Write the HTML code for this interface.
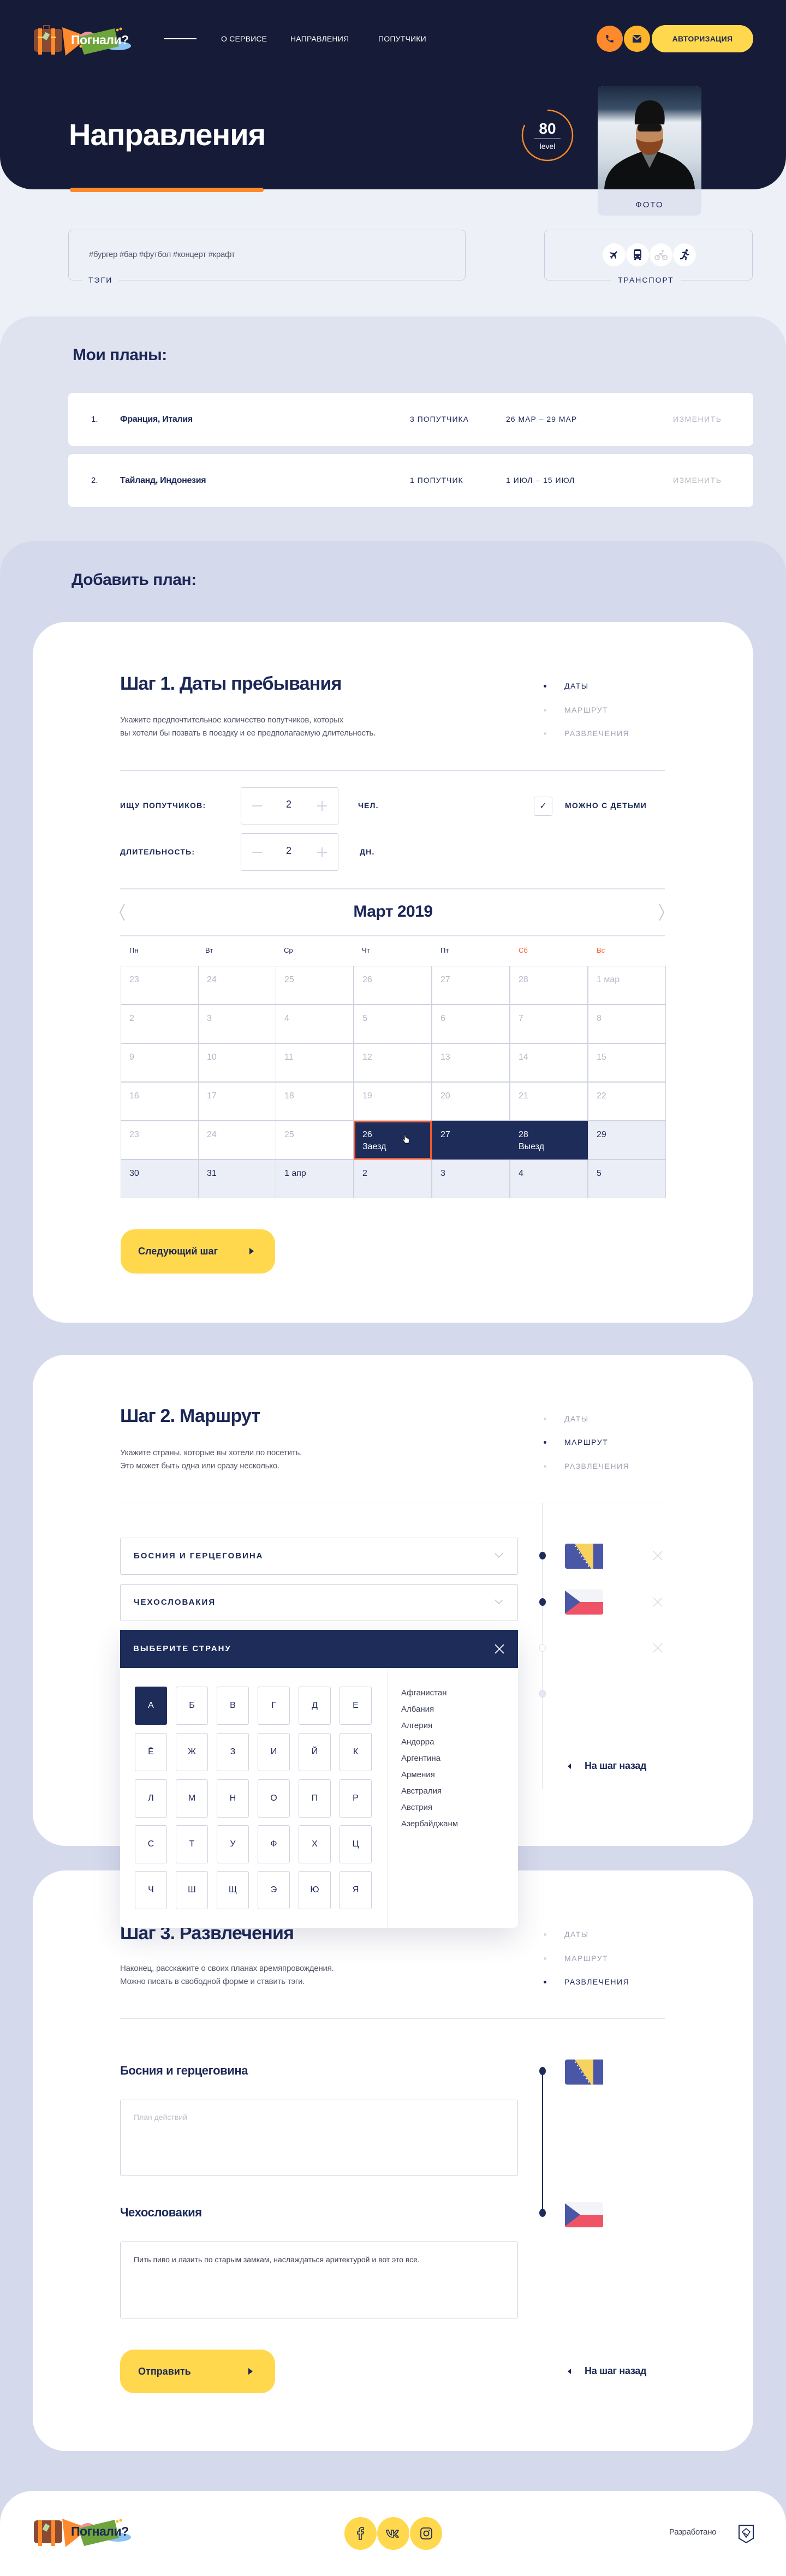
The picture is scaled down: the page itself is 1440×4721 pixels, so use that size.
<!DOCTYPE html>
<html lang="ru"><head><meta charset="utf-8"><style>
*{margin:0;padding:0;box-sizing:border-box}
body{width:1440px;height:4721px;background:#edf0f7;font-family:"Liberation Sans","DejaVu Sans",sans-serif;color:#1b2756;position:relative;overflow:hidden}
.a{position:absolute}
.nav{color:#fff;font-size:14px;top:62px;line-height:18px;letter-spacing:.2px}
.h2{font-size:30px;font-weight:bold;letter-spacing:-.5px;color:#1b2756}
.h3{font-size:34px;font-weight:bold;letter-spacing:-.8px;color:#1b2756}
.desc{font-size:15px;line-height:24px;color:#55586a;letter-spacing:-.2px}
.st{font-size:14px;letter-spacing:1.5px;color:#9ea1b2;line-height:18px}
.st.on{color:#1b2756}
.st:before{content:"";position:absolute;left:-38px;top:7px;width:5px;height:5px;border-radius:50%;background:#d4d7e2}
.st.on:before{background:#1b2756}
.hr{height:2px;background:#dfe2ec}
.lbl{font-size:14px;font-weight:bold;letter-spacing:1.2px;color:#1b2756;line-height:18px}
.card{background:#fff;border-radius:60px}
.cell{position:absolute;width:143px;height:71px;border:1px solid #cfd2e0;font-size:16px;color:#b4b7c6;padding:14px 0 0 15px;line-height:22px}
.lt{background:#ebeef6;color:#1b2756}
.nv{background:#1e2c5a;color:#fff}
.btn{background:#ffd84d;border-radius:26px;font-size:18px;font-weight:bold;color:#1b2756}
.dd{border:1px solid #cfd2e0;border-radius:3px;background:#fff;font-size:15px;letter-spacing:2px;color:#1b2756;font-weight:bold}
.k{position:absolute;width:59px;height:70px;border:1px solid #cfd2e0;border-radius:3px;text-align:center;line-height:68px;font-size:16px;color:#1b2756}
.cl{font-size:15px;color:#3d4156;line-height:30px}
.ta{border:1px solid #cfd2e0;border-radius:3px;background:#fff}
</style></head><body>

<!-- HEADER -->
<div class="a" style="left:0;top:0;width:1440px;height:347px;background:#161b37;border-radius:0 0 60px 60px"></div>
<svg class="a" style="left:58px;top:40px" width="205" height="70" viewBox="0 0 205 70">
 <path d="M56 10 L105 28 L62 62 Z" fill="#ff8a2b"/>
 <ellipse cx="103" cy="32" rx="16" ry="14" fill="#e9959a"/>
 <ellipse cx="158" cy="44" rx="24" ry="8" fill="#8ac4f2"/>
 <path d="M85 28 L152 12 L160 45 L96 60 Z" fill="#6ea43c"/>
 <circle cx="157" cy="15" r="2.5" fill="#ffb52b"/><circle cx="163" cy="13" r="2.5" fill="#ffb52b"/><circle cx="90" cy="45" r="2.5" fill="#ffb52b"/>
 <rect x="4" y="13" width="52" height="42" rx="6" fill="#8a4a32"/>
 <path d="M22 13 V7 H32 V13" stroke="#8a4a32" stroke-width="2" fill="none"/>
 <rect x="12" y="12" width="7" height="48" fill="#ff8a2b"/><rect x="36" y="12" width="7" height="48" fill="#ff8a2b"/>
 <rect x="11" y="27" width="9" height="3" fill="#ffd84d"/><rect x="35" y="27" width="9" height="3" fill="#ffd84d"/>
 <rect x="22" y="20" width="9" height="12" fill="#b9d8a8" transform="rotate(30 26 26)"/>
 <text x="72" y="41" font-family="Liberation Sans" font-weight="bold" font-size="23" fill="#fff" letter-spacing="-0.5">Погнали?</text>
</svg>
<div class="a" style="left:301px;top:70px;width:59px;height:2px;background:#fff"></div>
<div class="a nav" style="left:405px">О СЕРВИСЕ</div>
<div class="a nav" style="left:532px">НАПРАВЛЕНИЯ</div>
<div class="a nav" style="left:693px">ПОПУТЧИКИ</div>
<div class="a" style="left:1093px;top:47px;width:48px;height:48px;border-radius:50%;background:#ff8a2b"></div>
<svg class="a" style="left:1108px;top:62px" width="18" height="18" viewBox="0 0 24 24"><path d="M6.6 10.8c1.4 2.8 3.800 5.1 6.6 6.6l2.2-2.2c.3-.3.7-.4 1-.2 1.1.4 2.3.6 3.6.6.6 0 1 .4 1 1V20c0 .6-.4 1-1 1C10.6 21 3 13.4 3 4c0-.6.4-1 1-1h3.5c.6 0 1 .4 1 1 0 1.3.2 2.5.6 3.6.1.3 0 .7-.2 1L6.6 10.8z" fill="#1b2756"/></svg>
<div class="a" style="left:1143px;top:47px;width:48px;height:48px;border-radius:50%;background:#ffb52b"></div>
<svg class="a" style="left:1158px;top:63px" width="18" height="16" viewBox="0 0 18 16"><rect x="1" y="1" width="16" height="14" fill="#1b2756"/><path d="M1 2 L9 9 L17 2" stroke="#ffb52b" stroke-width="2" fill="none"/></svg>
<div class="a" style="left:1194px;top:46px;width:186px;height:50px;border-radius:25px;background:#ffd84d;color:#1b2756;font-size:14px;font-weight:bold;text-align:center;line-height:50px;letter-spacing:.3px">АВТОРИЗАЦИЯ</div>

<div class="a" style="left:126px;top:215px;font-size:56px;font-weight:bold;color:#fff;letter-spacing:-1px;line-height:64px">Направления</div>
<div class="a" style="left:128px;top:344px;width:355px;height:8px;border-radius:4px;background:#ff8a2b"></div>

<svg class="a" style="left:950px;top:195px" width="106" height="106" viewBox="0 0 106 106">
 <circle cx="53" cy="53" r="46" fill="none" stroke="#ff8a2b" stroke-width="2.5" stroke-dasharray="236 289" transform="rotate(-90 53 53)"/>
 <text x="53" y="50" text-anchor="middle" font-family="Liberation Sans" font-weight="bold" font-size="28" fill="#fff">80</text>
 <rect x="29" y="58" width="48" height="2" fill="#6a6f88"/>
 <text x="53" y="78" text-anchor="middle" font-family="Liberation Sans" font-size="14" fill="#fff">level</text>
</svg>

<div class="a" style="left:1095px;top:158px;width:190px;height:237px;border-radius:10px;background:#dfe2ef;overflow:hidden">
 <svg width="190" height="189" viewBox="0 0 190 189">
  <defs><linearGradient id="bg" x1="0" y1="0" x2="0" y2="1"><stop offset="0" stop-color="#1d2a40"/><stop offset=".22" stop-color="#3a5068"/><stop offset=".35" stop-color="#e8edf2"/><stop offset=".7" stop-color="#d3dce4"/><stop offset="1" stop-color="#a9b8c6"/></linearGradient></defs>
  <rect width="190" height="189" fill="url(#bg)"/>
  <path d="M12 189 C14 150 40 135 80 120 L110 120 C150 132 176 150 178 189 Z" fill="#0d0f10"/>
  <path d="M80 120 L95 150 L110 120 Z" fill="#6f7476"/>
  <ellipse cx="95" cy="88" rx="25" ry="32" fill="#c08a5e"/>
  <path d="M70 95 C72 120 85 126 95 126 C105 126 118 120 120 95 C112 105 78 105 70 95 Z" fill="#8a4620"/>
  <path d="M68 70 C66 34 82 26 96 26 C112 26 126 38 122 70 Z" fill="#111"/>
  <rect x="73" y="70" width="44" height="13" rx="5" fill="#151515"/>
 </svg>
 <div style="text-align:center;font-size:15px;letter-spacing:2px;color:#1b2756;line-height:48px">ФОТО</div>
</div>

<!-- tags / transport -->
<div class="a" style="left:125px;top:421px;width:728px;height:93px;border:1px solid #c9cde0;border-radius:8px"></div>
<div class="a" style="left:163px;top:458px;font-size:15px;color:#55586a;letter-spacing:-.3px">#бургер #бар #футбол #концерт #крафт</div>
<div class="a" style="left:150px;top:505px;padding:0 12px;background:#edf0f7;font-size:14px;letter-spacing:2px;color:#1b2756">ТЭГИ</div>
<div class="a" style="left:997px;top:421px;width:382px;height:93px;border:1px solid #c9cde0;border-radius:8px"></div>
<div class="a" style="left:1104px;top:446px;width:42px;height:42px;border-radius:50%;background:#fff"></div>
<div class="a" style="left:1147px;top:446px;width:42px;height:42px;border-radius:50%;background:#fff"></div>
<div class="a" style="left:1190px;top:446px;width:42px;height:42px;border-radius:50%;background:#fff"></div>
<div class="a" style="left:1233px;top:446px;width:42px;height:42px;border-radius:50%;background:#fff"></div>
<svg class="a" style="left:1115px;top:457px" width="20" height="20" viewBox="0 0 24 24"><path d="M21 16v-2l-8-5V3.5C13 2.7 12.3 2 11.5 2S10 2.700 10 3.5V9l-8 5v2l8-2.5V19l-2 1.5V22l3.5-1 3.5 1v-1.5L13 19v-5.5l8 2.5z" fill="#1b2756" transform="rotate(45 12 12)"/></svg>
<svg class="a" style="left:1159px;top:456px" width="18" height="22" viewBox="0 0 18 22"><rect x="2" y="1" width="14" height="17" rx="3" fill="#1b2756"/><rect x="4" y="4" width="10" height="6" fill="#fff"/><circle cx="5.5" cy="14" r="1.3" fill="#fff"/><circle cx="12.5" cy="14" r="1.3" fill="#fff"/><rect x="3" y="18" width="3" height="3" fill="#1b2756"/><rect x="12" y="18" width="3" height="3" fill="#1b2756"/></svg>
<svg class="a" style="left:1199px;top:456px" width="24" height="22" viewBox="0 0 24 22"><g stroke="#cfcfd4" stroke-width="1.8" fill="none"><circle cx="5" cy="16" r="4"/><circle cx="19" cy="16" r="4"/><path d="M5 16 L10 9 L14 13 L19 16 M10 9 L15 8"/></g><circle cx="15" cy="4" r="2" fill="#cfcfd4"/></svg>
<svg class="a" style="left:1244px;top:456px" width="20" height="22" viewBox="0 0 20 22"><circle cx="14" cy="3" r="2.2" fill="#1b2756"/><path d="M6 7 L12 6 L15 11 L18 10 M12 6 L9 13 L13 16 L12 21 M9 13 L6 18 L2 18" stroke="#1b2756" stroke-width="2.4" fill="none" stroke-linejoin="round"/></svg>
<div class="a" style="left:1120px;top:505px;padding:0 12px;background:#edf0f7;font-size:14px;letter-spacing:2px;color:#1b2756">ТРАНСПОРТ</div>

<!-- MY PLANS -->
<div class="a" style="left:0;top:580px;width:1440px;height:500px;background:#dfe2ef;border-radius:60px 60px 0 0"></div>
<div class="a h2" style="left:133px;top:634px">Мои планы:</div>
<div class="a" style="left:125px;top:720px;width:1255px;height:97px;background:#fff;border-radius:8px"></div>
<div class="a" style="left:125px;top:832px;width:1255px;height:97px;background:#fff;border-radius:8px"></div>
<div class="a" style="left:167px;top:760px;font-size:15px">1.</div>
<div class="a" style="left:220px;top:760px;font-size:16px;font-weight:bold;letter-spacing:-.3px">Франция, Италия</div>
<div class="a" style="left:751px;top:760px;font-size:14px;letter-spacing:1px">3 ПОПУТЧИКА</div>
<div class="a" style="left:927px;top:760px;font-size:14px;letter-spacing:1px">26 МАР – 29 МАР</div>
<div class="a" style="left:1233px;top:760px;font-size:14px;letter-spacing:1.5px;color:#b5b7c2">ИЗМЕНИТЬ</div>
<div class="a" style="left:167px;top:872px;font-size:15px">2.</div>
<div class="a" style="left:220px;top:872px;font-size:16px;font-weight:bold;letter-spacing:-.3px">Тайланд, Индонезия</div>
<div class="a" style="left:751px;top:872px;font-size:14px;letter-spacing:1px">1 ПОПУТЧИК</div>
<div class="a" style="left:927px;top:872px;font-size:14px;letter-spacing:1px">1 ИЮЛ – 15 ИЮЛ</div>
<div class="a" style="left:1233px;top:872px;font-size:14px;letter-spacing:1.5px;color:#b5b7c2">ИЗМЕНИТЬ</div>

<!-- ADD PLAN -->
<div class="a" style="left:0;top:992px;width:1440px;height:3729px;background:#d5d9ec;border-radius:60px 60px 0 0"></div>
<div class="a h2" style="left:131px;top:1046px">Добавить план:</div>

<!-- CARD 1 -->
<div class="a card" style="left:60px;top:1140px;width:1320px;height:1284px"></div>
<div class="a h3" style="left:220px;top:1234px">Шаг 1. Даты пребывания</div>
<div class="a desc" style="left:220px;top:1308px">Укажите предпочтительное количество попутчиков, которых<br>вы хотели бы позвать в поездку и ее предполагаемую длительность.</div>
<div class="a st on" style="left:1034px;top:1248px">ДАТЫ</div>
<div class="a st" style="left:1034px;top:1292px">МАРШРУТ</div>
<div class="a st" style="left:1034px;top:1335px">РАЗВЛЕЧЕНИЯ</div>
<div class="a hr" style="left:220px;top:1411px;width:998px"></div>
<div class="a lbl" style="left:220px;top:1467px">ИЩУ ПОПУТЧИКОВ:</div>
<div class="a" style="left:441px;top:1443px;width:179px;height:68px;border:1px solid #cfd2e0;border-radius:3px"></div>
<div class="a" style="left:462px;top:1476px;width:18px;height:2px;background:#cfd2e0"></div>
<div class="a" style="left:524px;top:1464px;font-size:18px">2</div>
<div class="a" style="left:581px;top:1476px;width:18px;height:2px;background:#cfd2e0"></div>
<div class="a" style="left:589px;top:1468px;width:2px;height:18px;background:#cfd2e0"></div>
<div class="a lbl" style="left:656px;top:1467px">ЧЕЛ.</div>
<div class="a" style="left:978px;top:1460px;width:34px;height:35px;border:1px solid #cfd2e0;border-radius:3px;text-align:center;line-height:33px;font-size:16px">✓</div>
<div class="a lbl" style="left:1035px;top:1467px">МОЖНО С ДЕТЬМИ</div>
<div class="a lbl" style="left:220px;top:1552px">ДЛИТЕЛЬНОСТЬ:</div>
<div class="a" style="left:441px;top:1527px;width:179px;height:69px;border:1px solid #cfd2e0;border-radius:3px"></div>
<div class="a" style="left:462px;top:1561px;width:18px;height:2px;background:#cfd2e0"></div>
<div class="a" style="left:524px;top:1549px;font-size:18px">2</div>
<div class="a" style="left:581px;top:1561px;width:18px;height:2px;background:#cfd2e0"></div>
<div class="a" style="left:589px;top:1553px;width:2px;height:18px;background:#cfd2e0"></div>
<div class="a lbl" style="left:659px;top:1552px">ДН.</div>
<div class="a hr" style="left:220px;top:1628px;width:998px"></div>
<svg class="a" style="left:218px;top:1656px" width="12" height="32"><path d="M10 1 L2 16 L10 31" stroke="#c6c8d4" stroke-width="2" fill="none"/></svg>
<svg class="a" style="left:1206px;top:1656px" width="12" height="32"><path d="M2 1 L10 16 L2 31" stroke="#c6c8d4" stroke-width="2" fill="none"/></svg>
<div class="a" style="left:620px;top:1654px;width:200px;text-align:center;font-size:30px;font-weight:bold;letter-spacing:-.5px">Март 2019</div>
<div class="a hr" style="left:220px;top:1714px;width:998px"></div>
<div class="a" style="left:237px;top:1734px;font-size:13px">Пн</div>
<div class="a" style="left:376px;top:1734px;font-size:13px">Вт</div>
<div class="a" style="left:520px;top:1734px;font-size:13px">Ср</div>
<div class="a" style="left:663px;top:1734px;font-size:13px">Чт</div>
<div class="a" style="left:807px;top:1734px;font-size:13px">Пт</div>
<div class="a" style="left:950px;top:1734px;font-size:13px;color:#ff5a2b">Сб</div>
<div class="a" style="left:1093px;top:1734px;font-size:13px;color:#ff5a2b">Вс</div>

<div class="cell" style="left:221px;top:1770px">23</div><div class="cell" style="left:363px;top:1770px">24</div><div class="cell" style="left:505px;top:1770px">25</div><div class="cell" style="left:648px;top:1770px">26</div><div class="cell" style="left:791px;top:1770px">27</div><div class="cell" style="left:934px;top:1770px">28</div><div class="cell" style="left:1077px;top:1770px">1 мар</div>
<div class="cell" style="left:221px;top:1841px">2</div><div class="cell" style="left:363px;top:1841px">3</div><div class="cell" style="left:505px;top:1841px">4</div><div class="cell" style="left:648px;top:1841px">5</div><div class="cell" style="left:791px;top:1841px">6</div><div class="cell" style="left:934px;top:1841px">7</div><div class="cell" style="left:1077px;top:1841px">8</div>
<div class="cell" style="left:221px;top:1912px">9</div><div class="cell" style="left:363px;top:1912px">10</div><div class="cell" style="left:505px;top:1912px">11</div><div class="cell" style="left:648px;top:1912px">12</div><div class="cell" style="left:791px;top:1912px">13</div><div class="cell" style="left:934px;top:1912px">14</div><div class="cell" style="left:1077px;top:1912px">15</div>
<div class="cell" style="left:221px;top:1983px">16</div><div class="cell" style="left:363px;top:1983px">17</div><div class="cell" style="left:505px;top:1983px">18</div><div class="cell" style="left:648px;top:1983px">19</div><div class="cell" style="left:791px;top:1983px">20</div><div class="cell" style="left:934px;top:1983px">21</div><div class="cell" style="left:1077px;top:1983px">22</div>
<div class="cell" style="left:221px;top:2054px">23</div><div class="cell" style="left:363px;top:2054px">24</div><div class="cell" style="left:505px;top:2054px">25</div>
<div class="cell nv" style="left:648px;top:2054px;border:3px solid #ff5a2b;padding:12px 0 0 13px">26<br>Заезд</div>
<div class="cell nv" style="left:791px;top:2054px;border-color:#1e2c5a">27</div>
<div class="cell nv" style="left:934px;top:2054px;border-color:#1e2c5a">28<br>Выезд</div>
<div class="cell lt" style="left:1077px;top:2054px">29</div>
<div class="cell lt" style="left:221px;top:2125px">30</div><div class="cell lt" style="left:363px;top:2125px">31</div><div class="cell lt" style="left:505px;top:2125px">1 апр</div><div class="cell lt" style="left:648px;top:2125px">2</div><div class="cell lt" style="left:791px;top:2125px">3</div><div class="cell lt" style="left:934px;top:2125px">4</div><div class="cell lt" style="left:1077px;top:2125px">5</div>
<svg class="a" style="left:737px;top:2079px" width="14" height="18" viewBox="0 0 14 18"><path d="M4 1 V10 L2 8 L1 10 L5 16 H12 L13 9 L10 8 V6 L8 6 V5 L6 5 V1 Z" fill="#fff" stroke="#000" stroke-width="1"/></svg>

<div class="a btn" style="left:221px;top:2253px;width:283px;height:81px;line-height:81px;padding-left:32px">Следующий шаг</div>
<svg class="a" style="left:456px;top:2286px" width="10" height="14"><path d="M1 1 L9 7 L1 13 Z" fill="#1b2756"/></svg>

<!-- CARD 2 -->
<div class="a card" style="left:60px;top:2483px;width:1320px;height:900px"></div>
<div class="a h3" style="left:220px;top:2576px">Шаг 2. Маршрут</div>
<div class="a desc" style="left:220px;top:2651px">Укажите страны, которые вы хотели по посетить.<br>Это может быть одна или сразу несколько.</div>
<div class="a st" style="left:1034px;top:2591px">ДАТЫ</div>
<div class="a st on" style="left:1034px;top:2634px">МАРШРУТ</div>
<div class="a st" style="left:1034px;top:2678px">РАЗВЛЕЧЕНИЯ</div>
<div class="a" style="left:220px;top:2754px;width:998px;height:1px;background:#dfe2ec"></div>
<div class="a" style="left:993px;top:2754px;width:1px;height:525px;background:#dfe2ec"></div>
<div class="a dd" style="left:220px;top:2818px;width:729px;height:68px;line-height:66px;padding-left:24px">БОСНИЯ И ГЕРЦЕГОВИНА</div>
<div class="a dd" style="left:220px;top:2903px;width:729px;height:68px;line-height:66px;padding-left:24px">ЧЕХОСЛОВАКИЯ</div>
<svg class="a" style="left:906px;top:2846px" width="16" height="10"><path d="M1 1 L8 8 L15 1" stroke="#b7bac8" stroke-width="1.3" fill="none"/></svg>
<svg class="a" style="left:906px;top:2931px" width="16" height="10"><path d="M1 1 L8 8 L15 1" stroke="#b7bac8" stroke-width="1.3" fill="none"/></svg>
<div class="a" style="left:988px;top:2844px;width:12px;height:14px;border-radius:50%;background:#1e2c5a"></div>
<div class="a" style="left:988px;top:2929px;width:12px;height:14px;border-radius:50%;background:#1e2c5a"></div>
<div class="a" style="left:988px;top:3013px;width:12px;height:14px;border-radius:50%;background:#fff;border:1px solid #dfe2ec"></div>
<div class="a" style="left:988px;top:3097px;width:12px;height:14px;border-radius:50%;background:#e6e9f2;border:1px solid #d4d8e6"></div>
<svg class="a" style="left:1035px;top:2829px" width="70" height="46" viewBox="0 0 70 46"><rect width="70" height="46" rx="4" fill="#4a56a6"/><path d="M18 0 H52 V46 H48 Z" fill="#f7d35e"/><rect x="52" width="18" height="46" fill="#4a56a6"/><g fill="#fff"><circle cx="19" cy="5" r="1.2"/><circle cx="23" cy="11" r="1.2"/><circle cx="27" cy="17" r="1.2"/><circle cx="31" cy="23" r="1.2"/><circle cx="35" cy="29" r="1.2"/><circle cx="39" cy="35" r="1.2"/><circle cx="43" cy="41" r="1.2"/></g></svg>
<svg class="a" style="left:1035px;top:2913px" width="70" height="46" viewBox="0 0 70 46"><rect width="70" height="46" rx="4" fill="#f3f4f8"/><path d="M0 23 H70 V42 Q70 46 66 46 H4 Q0 46 0 42 Z" fill="#ee5466"/><path d="M0 2 L28 23 L0 44 Z" fill="#4a56a6"/></svg>
<svg class="a" style="left:1196px;top:2842px" width="18" height="18"><path d="M1 1 L17 17 M17 1 L1 17" stroke="#d6d8e2" stroke-width="1.3"/></svg>
<svg class="a" style="left:1196px;top:2927px" width="18" height="18"><path d="M1 1 L17 17 M17 1 L1 17" stroke="#d6d8e2" stroke-width="1.3"/></svg>
<svg class="a" style="left:1196px;top:3011px" width="18" height="18"><path d="M1 1 L17 17 M17 1 L1 17" stroke="#d6d8e2" stroke-width="1.3"/></svg>
<svg class="a" style="left:1039px;top:3231px" width="8" height="12"><path d="M7 1 L1 6 L7 11 Z" fill="#1b2756"/></svg>
<div class="a" style="left:1071px;top:3226px;font-size:18px;font-weight:bold;letter-spacing:-.3px">На шаг назад</div>

<!-- CARD 3 -->
<div class="a card" style="left:60px;top:3428px;width:1320px;height:1064px"></div>
<div class="a h3" style="left:220px;top:3524px">Шаг 3. Развлечения</div>
<div class="a desc" style="left:220px;top:3596px">Наконец, расскажите о своих планах времяпровождения.<br>Можно писать в свободной форме и ставить тэги.</div>
<div class="a st" style="left:1034px;top:3536px">ДАТЫ</div>
<div class="a st" style="left:1034px;top:3580px">МАРШРУТ</div>
<div class="a st on" style="left:1034px;top:3623px">РАЗВЛЕЧЕНИЯ</div>
<div class="a" style="left:220px;top:3699px;width:998px;height:1px;background:#dfe2ec"></div>
<div class="a" style="left:220px;top:3782px;font-size:22px;font-weight:bold;letter-spacing:-.4px">Босния и герцеговина</div>
<div class="a ta" style="left:220px;top:3848px;width:729px;height:140px"></div>
<div class="a" style="left:245px;top:3872px;font-size:14px;color:#bfc1cc">План действий</div>
<div class="a" style="left:220px;top:4042px;font-size:22px;font-weight:bold;letter-spacing:-.4px">Чехословакия</div>
<div class="a ta" style="left:220px;top:4108px;width:729px;height:141px"></div>
<div class="a" style="left:245px;top:4133px;font-size:14px;color:#3d4156">Пить пиво и лазить по старым замкам, наслаждаться аритектурой и вот это все.</div>
<div class="a" style="left:993px;top:3796px;width:2px;height:260px;background:#1e2c5a"></div>
<div class="a" style="left:988px;top:3788px;width:12px;height:15px;border-radius:50%;background:#1e2c5a"></div>
<div class="a" style="left:988px;top:4048px;width:12px;height:15px;border-radius:50%;background:#1e2c5a"></div>
<svg class="a" style="left:1035px;top:3774px" width="70" height="47" viewBox="0 0 70 46"><rect width="70" height="46" rx="4" fill="#4a56a6"/><path d="M18 0 H52 V46 H48 Z" fill="#f7d35e"/><rect x="52" width="18" height="46" fill="#4a56a6"/><g fill="#fff"><circle cx="19" cy="5" r="1.2"/><circle cx="23" cy="11" r="1.2"/><circle cx="27" cy="17" r="1.2"/><circle cx="31" cy="23" r="1.2"/><circle cx="35" cy="29" r="1.2"/><circle cx="39" cy="35" r="1.2"/><circle cx="43" cy="41" r="1.2"/></g></svg>
<svg class="a" style="left:1035px;top:4036px" width="70" height="46" viewBox="0 0 70 46"><rect width="70" height="46" rx="4" fill="#f3f4f8"/><path d="M0 23 H70 V42 Q70 46 66 46 H4 Q0 46 0 42 Z" fill="#ee5466"/><path d="M0 2 L28 23 L0 44 Z" fill="#4a56a6"/></svg>
<div class="a btn" style="left:220px;top:4306px;width:284px;height:80px;line-height:80px;padding-left:33px">Отправить</div>
<svg class="a" style="left:454px;top:4339px" width="10" height="14"><path d="M1 1 L9 7 L1 13 Z" fill="#1b2756"/></svg>
<svg class="a" style="left:1039px;top:4340px" width="8" height="12"><path d="M7 1 L1 6 L7 11 Z" fill="#1b2756"/></svg>
<div class="a" style="left:1071px;top:4335px;font-size:18px;font-weight:bold;letter-spacing:-.3px">На шаг назад</div>

<!-- COUNTRY PICKER -->
<div class="a" style="left:220px;top:2987px;width:729px;height:546px;background:#fff;border-radius:0 0 8px 8px;box-shadow:0 20px 50px rgba(40,50,90,.15)"></div>
<div class="a" style="left:220px;top:2987px;width:729px;height:70px;background:#1e2c5a;color:#fff;font-size:15px;font-weight:bold;letter-spacing:2px;line-height:70px;padding-left:24px">ВЫБЕРИТЕ СТРАНУ</div>
<svg class="a" style="left:906px;top:3013px" width="18" height="18"><path d="M1 1 L17 17 M17 1 L1 17" stroke="#fff" stroke-width="1.6"/></svg>
<div class="a" style="left:709px;top:3057px;width:1px;height:476px;background:#eceef4"></div>
<div class="k" style="left:247px;top:3091px;background:#1e2c5a;color:#fff;border-color:#1e2c5a">А</div><div class="k" style="left:322px;top:3091px">Б</div><div class="k" style="left:397px;top:3091px">В</div><div class="k" style="left:472px;top:3091px">Г</div><div class="k" style="left:547px;top:3091px">Д</div><div class="k" style="left:622px;top:3091px">Е</div>
<div class="k" style="left:247px;top:3176px">Ё</div><div class="k" style="left:322px;top:3176px">Ж</div><div class="k" style="left:397px;top:3176px">З</div><div class="k" style="left:472px;top:3176px">И</div><div class="k" style="left:547px;top:3176px">Й</div><div class="k" style="left:622px;top:3176px">К</div>
<div class="k" style="left:247px;top:3261px">Л</div><div class="k" style="left:322px;top:3261px">М</div><div class="k" style="left:397px;top:3261px">Н</div><div class="k" style="left:472px;top:3261px">О</div><div class="k" style="left:547px;top:3261px">П</div><div class="k" style="left:622px;top:3261px">Р</div>
<div class="k" style="left:247px;top:3345px">С</div><div class="k" style="left:322px;top:3345px">Т</div><div class="k" style="left:397px;top:3345px">У</div><div class="k" style="left:472px;top:3345px">Ф</div><div class="k" style="left:547px;top:3345px">Х</div><div class="k" style="left:622px;top:3345px">Ц</div>
<div class="k" style="left:247px;top:3429px">Ч</div><div class="k" style="left:322px;top:3429px">Ш</div><div class="k" style="left:397px;top:3429px">Щ</div><div class="k" style="left:472px;top:3429px">Э</div><div class="k" style="left:547px;top:3429px">Ю</div><div class="k" style="left:622px;top:3429px">Я</div>
<div class="a cl" style="left:735px;top:3088px">Афганистан<br>Албания<br>Алгерия<br>Андорра<br>Аргентина<br>Армения<br>Австралия<br>Австрия<br>Азербайджанм</div>

<!-- FOOTER -->
<div class="a" style="left:0;top:4565px;width:1440px;height:156px;background:#fff;border-radius:60px 60px 0 0"></div>
<svg class="a" style="left:58px;top:4606px" width="205" height="70" viewBox="0 0 205 70">
 <path d="M56 10 L105 28 L62 62 Z" fill="#ff8a2b"/>
 <ellipse cx="103" cy="32" rx="16" ry="14" fill="#e9959a"/>
 <ellipse cx="158" cy="44" rx="24" ry="8" fill="#8ac4f2"/>
 <path d="M85 28 L152 12 L160 45 L96 60 Z" fill="#6ea43c"/>
 <circle cx="157" cy="15" r="2.5" fill="#ffb52b"/><circle cx="163" cy="13" r="2.5" fill="#ffb52b"/>
 <rect x="4" y="13" width="52" height="42" rx="6" fill="#8a4a32"/>
 <rect x="12" y="12" width="7" height="48" fill="#ff8a2b"/><rect x="36" y="12" width="7" height="48" fill="#ff8a2b"/>
 <rect x="22" y="20" width="9" height="12" fill="#b9d8a8" transform="rotate(30 26 26)"/>
 <text x="72" y="41" font-family="Liberation Sans" font-weight="bold" font-size="23" fill="#1b2756" letter-spacing="-0.5">Погнали?</text>
</svg>
<div class="a" style="left:631px;top:4613px;width:59px;height:60px;border-radius:50%;background:#ffd84d"></div>
<div class="a" style="left:691px;top:4613px;width:59px;height:60px;border-radius:50%;background:#ffd84d"></div>
<div class="a" style="left:751px;top:4613px;width:59px;height:60px;border-radius:50%;background:#ffd84d"></div>
<svg class="a" style="left:652px;top:4631px" width="16" height="24" viewBox="0 0 16 24"><path d="M10 23 V13 H13 L14 9 H10 V6.5 C10 5.5 10.5 5 11.5 5 H14 V1.5 C13 1.3 12 1.2 10.8 1.2 C7.8 1.2 6 3 6 6 V9 H3 V13 H6 V23 Z" fill="none" stroke="#1b2756" stroke-width="1.6"/></svg>
<svg class="a" style="left:707px;top:4635px" width="28" height="16" viewBox="0 0 28 16"><path d="M1 2 H5 C6 7 8 10 10 11 V2 H14 V8 C16 7 18 4 19 2 H23 C22 5 20 8 17 9.5 C20 11 22 13 23 15 H19 C18 13 16 11 14 10.5 V15 H12 C6 15 2 10 1 2 Z" fill="none" stroke="#1b2756" stroke-width="1.6" stroke-linejoin="round"/></svg>
<svg class="a" style="left:769px;top:4631px" width="24" height="24" viewBox="0 0 24 24"><rect x="2" y="2" width="20" height="20" rx="5" fill="none" stroke="#1b2756" stroke-width="1.8"/><circle cx="12" cy="12" r="4.5" fill="none" stroke="#1b2756" stroke-width="1.8"/><circle cx="17.5" cy="6.5" r="1.2" fill="#1b2756"/></svg>
<div class="a" style="left:1226px;top:4632px;font-size:15px;color:#3d4156;letter-spacing:-.3px">Разработано</div>
<svg class="a" style="left:1352px;top:4626px" width="30" height="36" viewBox="0 0 30 36"><path d="M2 2 H28 V26 L15 34 L2 26 Z" fill="none" stroke="#1b2756" stroke-width="2"/><path d="M8 14 L15 8 L22 14 L15 24 Z" fill="none" stroke="#1b2756" stroke-width="1.6"/><path d="M11 16 L19 22" stroke="#1b2756" stroke-width="1.6"/></svg>
</body></html>
